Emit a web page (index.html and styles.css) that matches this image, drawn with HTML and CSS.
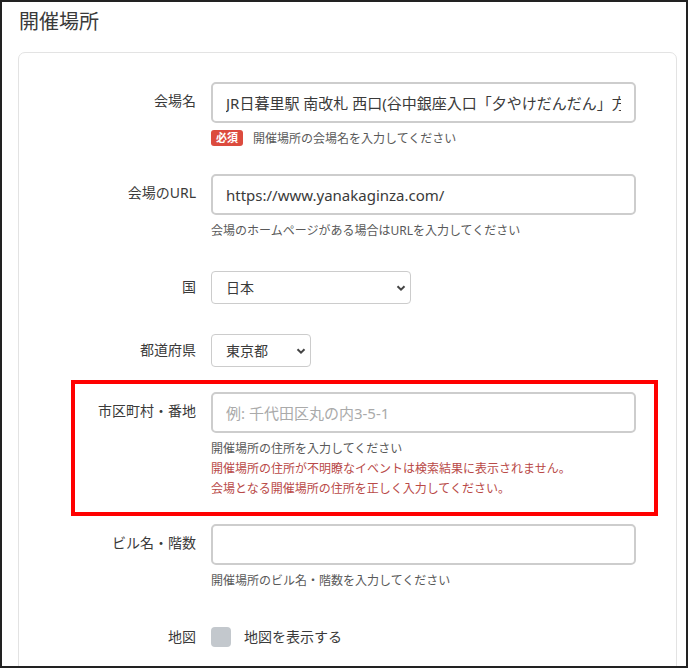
FILE: index.html
```html
<!DOCTYPE html>
<html lang="ja">
<head>
  <meta charset="utf-8">
  <link rel="stylesheet" href="styles.css">
</head>
<body>
  <div class="frame">
    <h2>開催場所</h2>

    <div class="card">
      <div class="field tight">
        <label class="field-label" for="venueName">会場名</label>
        <div class="field-body">
          <input type="text" id="venueName" class="text-input" value="JR日暮里駅 南改札 西口(谷中銀座入口「夕やけだんだん」方面)">
          <p class="help"><span class="badge">必須</span>開催場所の会場名を入力してください</p>
        </div>
      </div>

      <div class="field">
        <label class="field-label" for="venueUrl">会場のURL</label>
        <div class="field-body">
          <input type="text" id="venueUrl" class="text-input" value="https://www.yanakaginza.com/">
          <p class="help">会場のホームページがある場合はURLを入力してください</p>
        </div>
      </div>

      <div class="field">
        <label class="field-label" for="country">国</label>
        <div class="field-body">
          <div class="select-wrap country">
            <select id="country">
              <option>日本</option>
            </select>
            <svg class="chevron" width="10" height="8" viewBox="0 0 10 8"><path d="M1.5 2.2 5 5.6 8.5 2.2" fill="none" stroke="#444" stroke-width="2"/></svg>
          </div>
        </div>
      </div>

      <div class="field tight">
        <label class="field-label" for="pref">都道府県</label>
        <div class="field-body">
          <div class="select-wrap pref">
            <select id="pref">
              <option>東京都</option>
            </select>
            <svg class="chevron" width="10" height="8" viewBox="0 0 10 8"><path d="M1.5 2.2 5 5.6 8.5 2.2" fill="none" stroke="#444" stroke-width="2"/></svg>
          </div>
        </div>
      </div>

      <div class="field tight highlight">
        <label class="field-label" for="address">市区町村・番地</label>
        <div class="field-body">
          <input type="text" id="address" class="text-input" placeholder="例: 千代田区丸の内3-5-1">
          <p class="help">開催場所の住所を入力してください</p>
          <p class="help warn">開催場所の住所が不明瞭なイベントは検索結果に表示されません。</p>
          <p class="help warn">会場となる開催場所の住所を正しく入力してください。</p>
        </div>
      </div>

      <div class="field loose">
        <label class="field-label" for="building">ビル名・階数</label>
        <div class="field-body">
          <input type="text" id="building" class="text-input">
          <p class="help">開催場所のビル名・階数を入力してください</p>
        </div>
      </div>

      <div class="field check-row">
        <span class="field-label">地図</span>
        <label class="check">
          <span class="check-box"></span>
          地図を表示する
        </label>
      </div>
    </div>
  </div>
</body>
</html>
```

FILE: styles.css
```css
* {
  box-sizing: border-box;
}

html, body {
  margin: 0;
  padding: 0;
  background: #fff;
}

body {
  font-family: "Noto Sans", "Noto Sans CJK JP", sans-serif;
  color: #333;
}

.frame {
  width: 688px;
  height: 668px;
  border: 2px solid #222;
  overflow: hidden;
  padding: 0 9px 0 16px;
}

h2 {
  margin: 0;
  padding: 5px 0 0 1px;
  height: 50px;
  font-size: 20px;
  font-weight: 400;
  line-height: 30px;
  color: #3a3a3a;
}

.card {
  border: 1px solid #e3e3e3;
  border-radius: 7px;
  background: #fff;
  padding: 29px 40px 0 0;
  height: 640px;
}

.field {
  display: grid;
  grid-template-columns: 177px 425px;
  column-gap: 15px;
  margin-bottom: 30px;
}

.field.tight {
  margin-bottom: 25px;
}

.field.loose {
  margin-bottom: 36px;
}

.field-label {
  text-align: right;
  font-size: 14px;
  line-height: 38px;
  color: #3a3a3a;
}

.text-input {
  display: block;
  width: 100%;
  height: 41px;
  padding: 0 13px;
  border: 2px solid #cdcdcd;
  border-radius: 5px;
  font-family: inherit;
  font-size: 15px;
  color: #3a3a3a;
  background: #fff;
}

.text-input::placeholder {
  color: #aaa;
}

.help {
  margin: 0;
  font-size: 12px;
  line-height: 20px;
  color: #595959;
}

.field-body > .help:first-of-type {
  margin-top: 6px;
}

.help.warn {
  color: #b94a48;
}

.badge {
  display: inline-block;
  background: #dc4b3e;
  color: #fff;
  font-size: 11px;
  font-weight: 700;
  line-height: 16px;
  padding: 0 5px;
  border-radius: 3px;
  margin-right: 10px;
  vertical-align: 1px;
}

/* selects */
.select-wrap {
  position: relative;
}

.select-wrap.country {
  width: 200px;
}

.select-wrap.pref {
  width: 100px;
}

.select-wrap select {
  appearance: none;
  -webkit-appearance: none;
  width: 100%;
  height: 33px;
  padding: 0 14px;
  border: 1px solid #ccc;
  border-radius: 4px;
  background: #fff;
  font-family: inherit;
  font-size: 14px;
  color: #3a3a3a;
}

.chevron {
  position: absolute;
  right: 5px;
  top: 13px;
  pointer-events: none;
}

.field:has(.select-wrap) .field-label {
  line-height: 31px;
}

.field.check-row .field-label,
.check {
  line-height: 20px;
}

/* red annotation box */
.highlight {
  position: relative;
}

.highlight::after {
  content: "";
  position: absolute;
  top: -12px;
  bottom: -17px;
  left: 52px;
  right: -22px;
  border: 4px solid #f00;
  pointer-events: none;
}

/* checkbox */
.check {
  display: flex;
  align-items: center;
  font-size: 14px;
  color: #3a3a3a;
}

.check-box {
  width: 20px;
  height: 20px;
  border-radius: 4px;
  background: #c3c8cd;
  margin-right: 13px;
}
```
